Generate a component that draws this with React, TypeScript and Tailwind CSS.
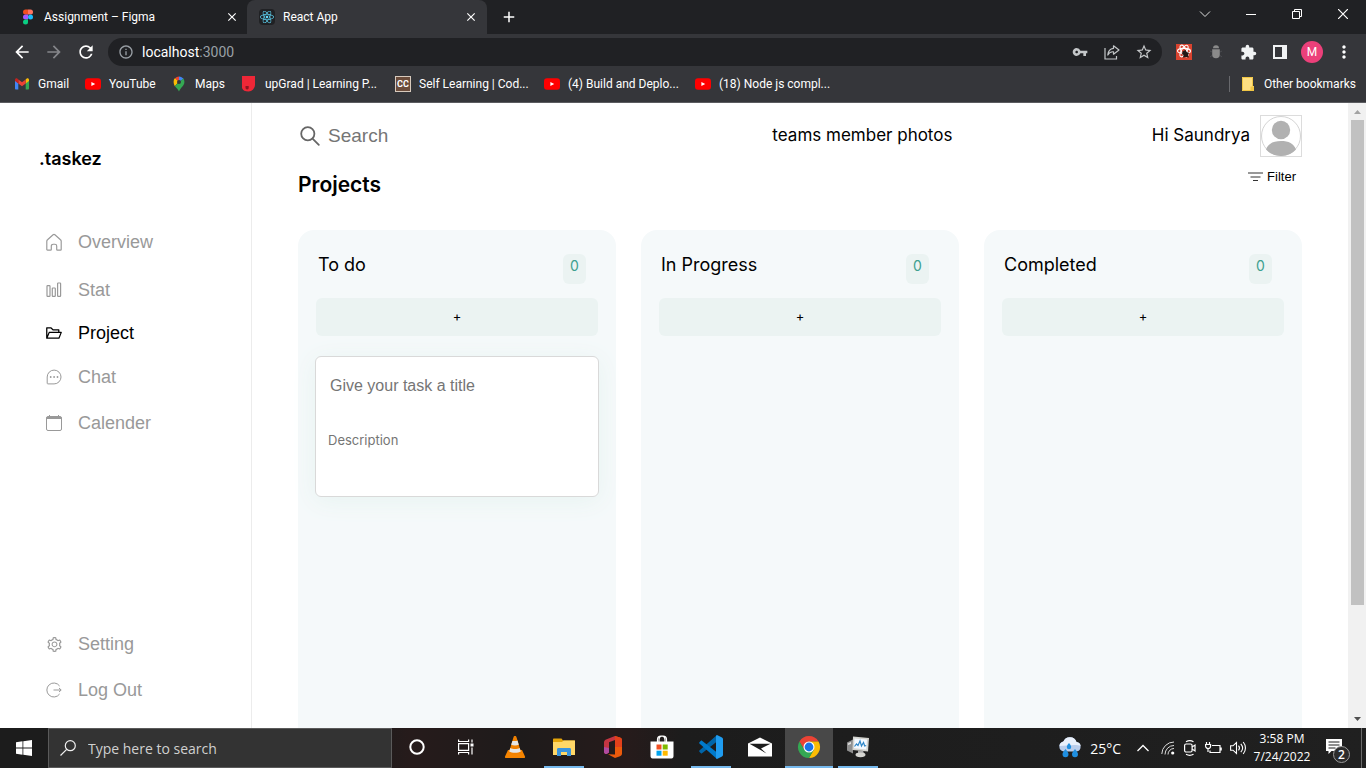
import React from "react";
import {
  MdArrowBack,
  MdArrowForward,
  MdRefresh,
  MdInfoOutline,
  MdVpnKey,
  MdStarBorder,
  MdExtension,
  MdMoreVert,
  MdClose,
  MdAdd,
} from "react-icons/md";
import { AiOutlineFolderOpen, AiOutlineSetting } from "react-icons/ai";
import { FaReact } from "react-icons/fa";

/* ---------- browser chrome ---------- */

function FigmaLogo() {
  return (
    <svg width="12" height="16" viewBox="0 0 12 16">
      <path d="M3.5 0.5H6v5H3.5a2.5 2.5 0 0 1 0-5z" fill="#f24e1e" />
      <path d="M6 0.5h2.5a2.5 2.5 0 0 1 0 5H6z" fill="#ff7262" />
      <path d="M3.5 5.5H6v5H3.5a2.5 2.5 0 0 1 0-5z" fill="#a259ff" />
      <circle cx="8.5" cy="8" r="2.5" fill="#1abcfe" />
      <path d="M3.5 10.5H6V13a2.5 2.5 0 1 1-2.5-2.5z" fill="#0acf83" />
    </svg>
  );
}

function GmailLogo() {
  return (
    <svg width="16" height="16" viewBox="0 0 16 16">
      <path d="M1 4.2v8.3c0 .5.4 1 1 1h2.3V7.2z" fill="#4285f4" />
      <path d="M15 4.2v8.3c0 .5-.4 1-1 1h-2.3V7.2z" fill="#34a853" />
      <path d="M11.7 3.6v3.8L15 5V3.9c0-1.4-1.5-2-2.5-1.2z" fill="#fbbc04" />
      <path d="M4.3 7.4V3.4L8 6.2l3.7-2.8v4L8 10.2z" fill="#ea4335" />
      <path d="M1 5V3.9C1 2.5 2.5 1.9 3.5 2.7l.8.7v4z" fill="#c5221f" />
    </svg>
  );
}

function YouTubeLogo() {
  return (
    <svg width="16" height="16" viewBox="0 0 16 16">
      <rect x="0" y="2.2" width="16" height="11.6" rx="3" fill="#f00" />
      <path d="M6.4 5.9v4.2L10.2 8z" fill="#fff" />
    </svg>
  );
}

function MapsLogo() {
  return (
    <svg width="16" height="16" viewBox="0 0 16 16">
      <path d="M2.6 6A5.4 5.4 0 0 1 4 2l4 3.5-4.2 4.7C3 8.7 2.6 7.5 2.6 6z" fill="#fbbc04" />
      <path d="M4 2.2A5.4 5.4 0 0 1 8 .4v5.4z" fill="#ea4335" />
      <path d="M8 .4c1.8 0 3.5 1 4.5 2.3L8 6z" fill="#4285f4" />
      <path d="M12.4 2.5c.7 1 1 2.2 1 3.5 0 4-4 5.5-5.4 9.6-.6-2-2.700-3.700-4.200-5.600z" fill="#34a853" />
      <circle cx="8" cy="5.9" r="2" fill="#35363a" />
    </svg>
  );
}

function UpgradLogo() {
  return (
    <svg width="16" height="16" viewBox="0 0 16 16">
      <path d="M1 0h13v9a6.5 6.5 0 0 1-6.5 6.500C4 15.500 1.800 14.500 1 12z" fill="#ee2737" />
      <path d="M4.500 10h3.200v1.700a1.600 1.600 0 0 1-3.200.3z" fill="#8d1420" />
    </svg>
  );
}

function CodingLogo() {
  return (
    <span className="flex h-4 w-4 items-center justify-center border border-[#d8cabd] bg-[#6b4c3b] text-[9px] leading-3 font-bold text-white">
      CC
    </span>
  );
}

const bookmarks = [
  { label: "Gmail", icon: <GmailLogo />, width: "w-[71px]" },
  { label: "YouTube", icon: <YouTubeLogo />, width: "w-[86px]" },
  { label: "Maps", icon: <MapsLogo />, width: "w-[70px]" },
  { label: "upGrad | Learning P...", icon: <UpgradLogo />, width: "w-[154px]" },
  { label: "Self Learning | Cod...", icon: <CodingLogo />, width: "w-[149px]" },
  { label: "(4) Build and Deplo...", icon: <YouTubeLogo />, width: "w-[151px]" },
  { label: "(18) Node js compl...", icon: <YouTubeLogo />, width: "w-[151px]" },
];

function TabStrip() {
  return (
    <div className="flex h-[34px] shrink-0 bg-[#202124]">
      <div className="flex w-[247px] items-center pl-[22px] pr-[7px]">
        <FigmaLogo />
        <span className="ml-[10px] flex-1 truncate">Assignment – Figma</span>
        <button aria-label="Close Assignment tab" className="flex w-4 justify-center">
          <MdClose size={14} />
        </button>
      </div>
      <div className="flex w-[240px] items-center rounded-t-lg bg-[#35363a] pl-3 pr-2">
        <span className="flex h-4 w-4 items-center justify-center rounded-sm bg-[#202124] text-[#61dafb]">
          <FaReact size={14} />
        </span>
        <span className="ml-2 flex-1 truncate">React App</span>
        <button aria-label="Close React App tab" className="flex w-4 justify-center">
          <MdClose size={14} />
        </button>
      </div>
      <button aria-label="New tab" className="flex w-11 items-center justify-center">
        <MdAdd size={18} />
      </button>
      <div className="ml-auto flex h-7">
        <button aria-label="Search tabs" className="flex w-[46px] items-center justify-center">
          <svg width="12" height="12" viewBox="0 0 12 12" fill="none" stroke="#ddd">
            <path d="M1 3.5l5 5 5-5" />
          </svg>
        </button>
        <button aria-label="Minimize" className="flex w-[46px] items-center justify-center">
          <svg width="10" height="10" viewBox="0 0 10 10" stroke="#fff">
            <path d="M0 5.5h10" />
          </svg>
        </button>
        <button aria-label="Restore" className="flex w-[46px] items-center justify-center">
          <svg width="10" height="10" viewBox="0 0 10 10" fill="none" stroke="#fff">
            <path d="M.5 2.5h7v7h-7zM2.5 2.5v-2h7v7h-2" />
          </svg>
        </button>
        <button aria-label="Close window" className="flex w-[46px] items-center justify-center">
          <svg width="10" height="10" viewBox="0 0 10 10" stroke="#fff" strokeWidth="1.2">
            <path d="M0 0l10 10M10 0L0 10" />
          </svg>
        </button>
      </div>
    </div>
  );
}

function ToolButton({ label, children }: { label: string; children: React.ReactNode }) {
  return (
    <button aria-label={label} className="flex h-7 w-8 shrink-0 items-center justify-center">
      {children}
    </button>
  );
}

function Toolbar() {
  return (
    <div className="flex h-9 shrink-0 items-center bg-[#35363a] px-[6px]">
      <ToolButton label="Back"><MdArrowBack size={20} /></ToolButton>
      <ToolButton label="Forward"><MdArrowForward size={20} color="#85868a" /></ToolButton>
      <ToolButton label="Reload"><MdRefresh size={20} /></ToolButton>
      <div className="mx-[6px] flex h-7 flex-1 items-center rounded-full bg-[#202124] pr-[2px] pl-[10px] text-[#c4c7c9]">
        <MdInfoOutline size={16} color="#9aa0a6" />
        <a href="#" className="ml-2 flex-1 text-[14px] text-white">
          localhost<span className="text-[#9aa0a6]">:3000</span>
        </a>
        <ToolButton label="Passwords"><MdVpnKey size={16} /></ToolButton>
        <ToolButton label="Share">
          <svg width="16" height="16" viewBox="0 0 16 16" fill="none" stroke="currentColor" strokeWidth="1.2">
            <path d="M1 4v11h11.5v-3" />
            <path d="M9.5 1.8L15 6l-5.5 4.2V7.8C7 7.6 5 8.6 3.8 11c.3-4 2.2-6.300 5.700-6.700z" strokeLinejoin="round" />
          </svg>
        </ToolButton>
        <ToolButton label="Bookmark this tab"><MdStarBorder size={18} /></ToolButton>
      </div>
      <ToolButton label="React extension">
        <svg width="16" height="16" viewBox="0 0 16 16">
          <rect width="16" height="16" fill="#d9432f" />
          <g fill="none" stroke="#fff" strokeWidth="1.1">
            <ellipse cx="8" cy="7" rx="6.5" ry="2.6" />
            <ellipse cx="8" cy="7" rx="6.5" ry="2.6" transform="rotate(60 8 7)" />
            <ellipse cx="8" cy="7" rx="6.5" ry="2.6" transform="rotate(120 8 7)" />
          </g>
          <path d="M6.5 7.500l3-1.500 1.200 2 2.300 1-1 2 1 2.500-3-.5-3 .5.500-2.500-1.500-1z" fill="#231815" />
        </svg>
      </ToolButton>
      <ToolButton label="Debugger extension">
        <svg width="14" height="16" viewBox="0 0 14 16">
          <path d="M4 4.200a3 3 0 0 1 6 0z" fill="#8a8a8a" />
          <path d="M3.200 5.200h7.600v5.300a3.800 3.800 0 0 1-7.600 0z" fill="#8a8a8a" />
          <path d="M1 7l2 1M13 7l-2 1M1 13l2-1.500M13 13l-2-1.500" stroke="#4c4d51" />
        </svg>
      </ToolButton>
      <ToolButton label="Extensions"><MdExtension size={17} color="#f1f3f4" /></ToolButton>
      <ToolButton label="Side panel">
        <svg width="14" height="14" viewBox="0 0 14 14">
          <path d="M1 1h12v12H1z" fill="none" stroke="#f1f3f4" strokeWidth="2" />
          <path d="M9 1h4v12H9z" fill="#f1f3f4" />
        </svg>
      </ToolButton>
      <ToolButton label="Profile">
        <span className="flex h-[22px] w-[22px] items-center justify-center rounded-full bg-[#ec407a] text-[12px]">M</span>
      </ToolButton>
      <ToolButton label="Menu"><MdMoreVert size={20} /></ToolButton>
    </div>
  );
}

function BookmarksBar() {
  return (
    <div className="flex h-[33px] shrink-0 items-center border-b border-[#5b5c60] bg-[#35363a] pb-1 pl-[14px] pr-[10px]">
      {bookmarks.map((b) => (
        <a key={b.label} href="#" className={`flex items-center gap-2 whitespace-nowrap ${b.width}`}>
          {b.icon}
          {b.label}
        </a>
      ))}
      <div className="ml-auto flex items-center">
        <span className="mr-3 h-4 w-px bg-[#68696d]" />
        <a href="#" className="flex items-center gap-[10px] whitespace-nowrap">
          <svg width="12" height="14" viewBox="0 0 12 14">
            <path d="M0 0h11v9h1v5H0z" fill="#ffe082" />
            <path d="M.5.5h10v9M.5.5v13h9.5" stroke="#f1c644" fill="none" />
            <path d="M8.5 9.5H12V14H8.5z" fill="#f1c644" />
          </svg>
          Other bookmarks
        </a>
      </div>
    </div>
  );
}

/* ---------- page ---------- */

type NavEntry = { label: string; height: string; icon: React.ReactNode; active?: boolean };

const navTop: NavEntry[] = [
  {
    label: "Overview",
    height: "h-[50px]",
    icon: (
      <svg width="18" height="18" viewBox="0 0 18 20" fill="none" stroke="currentColor" strokeWidth="1.3" strokeLinejoin="round">
        <path d="M1 9.2c0-.7.3-1.3.8-1.7l6.2-5.6a1.5 1.5 0 0 1 2 0l6.2 5.6c.5.4.8 1 .8 1.7v9c0 .5-.3.8-.8.8h-3.400c-.5 0-.8-.3-.8-.8v-3.700c0-1.100-.9-2-2-2H8c-1.100 0-2 .9-2 2v3.700c0 .5-.3.800-.8.800H1.800c-.5 0-.8-.3-.8-.8z" />
      </svg>
    ),
  },
  {
    label: "Stat",
    height: "h-[46px]",
    icon: (
      <svg width="16" height="16" viewBox="0 0 16 16" fill="none" stroke="currentColor" strokeWidth="1.2">
        <rect x="1" y="3.6" width="3" height="10.8" rx=".6" />
        <rect x="6.3" y="6" width="3" height="8.4" rx=".6" />
        <rect x="11.6" y="1" width="3" height="13.4" rx=".6" />
      </svg>
    ),
  },
  { label: "Project", height: "h-[40px]", icon: <AiOutlineFolderOpen size={18} />, active: true },
  {
    label: "Chat",
    height: "h-[48px]",
    icon: (
      <svg width="16" height="16" viewBox="0 0 16 16" fill="none" stroke="currentColor">
        <path d="M1.2 14.2V8a6.9 6.9 0 1 1 6.9 6.9H1.9a.7.7 0 0 1-.7-.7z" />
        <g fill="currentColor" stroke="none">
          <circle cx="4.7" cy="8" r=".9" />
          <circle cx="8.1" cy="8" r=".9" />
          <circle cx="11.5" cy="8" r=".9" />
        </g>
      </svg>
    ),
  },
  {
    label: "Calender",
    height: "h-[44px]",
    icon: (
      <svg width="16" height="16" viewBox="0 0 16 16" fill="none" stroke="currentColor">
        <rect x=".5" y="1.5" width="15" height="14" rx="1.5" />
        <path d="M.5 2.5h15M.5 3.5h15M3.5 0v2M12.5 0v2" />
      </svg>
    ),
  },
];

const navBottom: NavEntry[] = [
  { label: "Setting", height: "h-[46px]", icon: <AiOutlineSetting size={17} /> },
  {
    label: "Log Out",
    height: "h-[46px]",
    icon: (
      <svg width="16" height="16" viewBox="0 0 16 16" fill="none" stroke="currentColor">
        <path d="M13.6 4A7 7 0 1 0 13.6 12M7.5 8h7.500M13 6l2.200 2-2.200 2" />
      </svg>
    ),
  },
];

function NavList({ items }: { items: NavEntry[] }) {
  return (
    <ul>
      {items.map((n) => (
        <li key={n.label}>
          <a
            href="#"
            className={`flex items-center gap-[14px] text-[18px] ${n.height} ${n.active ? "text-black" : "text-[#999999]"}`}
          >
            <span className="flex w-5 justify-center">{n.icon}</span>
            {n.label}
          </a>
        </li>
      ))}
    </ul>
  );
}

function Sidebar() {
  return (
    <aside className="flex w-[252px] shrink-0 flex-col border-r border-[#ececec] bg-white pb-[15px]">
      <div className="mt-[42px] ml-[39px] font-['Inter',sans-serif] text-[18px] leading-7 font-semibold">.taskez</div>
      <nav className="mt-11 flex flex-1 flex-col justify-between pl-11">
        <NavList items={navTop} />
        <NavList items={navBottom} />
      </nav>
    </aside>
  );
}

function PageHeader() {
  return (
    <header className="flex h-[42px] items-center justify-between">
      <label className="flex w-[275px] items-center gap-2 pl-[2px]">
        <svg className="shrink-0" width="20" height="20" viewBox="0 0 20 20" fill="none" stroke="#666" strokeWidth="1.8" strokeLinecap="round">
          <circle cx="7.8" cy="7.8" r="6.6" />
          <path d="M12.800 12.800l6 6" />
        </svg>
        <input
          aria-label="Search"
          placeholder="Search"
          className="w-full bg-transparent text-[19px] outline-none placeholder:text-[#757575]"
        />
      </label>
      <p className="font-['Inter',sans-serif] text-[17px]">teams member photos</p>
      <div className="flex items-center gap-[10px] font-['Inter',sans-serif] text-[17px]">
        Hi Saundrya
        <svg width="42" height="42" viewBox="0 0 42 42">
          <rect x=".5" y=".5" width="41" height="41" fill="#fff" stroke="#dcdcdc" />
          <circle cx="21" cy="21" r="19.5" fill="#fff" stroke="#d4d4d4" />
          <circle cx="21" cy="15" r="9.2" fill="#b1b1b1" />
          <path d="M6 34.5C8 28.5 13.5 26 21 26s13 2.500 15 8.500A19.500 19.500 0 0 1 21 41a19.500 19.500 0 0 1-15-6.500z" fill="#b1b1b1" />
        </svg>
      </div>
    </header>
  );
}

function Column({ title, children }: { title: string; children?: React.ReactNode }) {
  return (
    <section className="min-h-[720px] rounded-[16px] bg-[#f5f9fa] px-[17px] pt-5">
      <div className="flex items-start justify-between pr-[13px] pl-[3px] font-['Inter',sans-serif]">
        <h2 className="text-[18px] leading-[30px]">{title}</h2>
        <span className="mt-1 h-[30px] w-[23px] rounded-md bg-[#ebf3f2] text-center text-[14px] leading-6 text-[#3da08f]">
          0
        </span>
      </div>
      <div className="mt-[14px] px-px">
        <button
          aria-label={`Add task to ${title}`}
          className="h-[38px] w-full rounded-md bg-[#ebf3f2] font-['Inter',sans-serif] text-[13px]"
        >
          +
        </button>
      </div>
      {children}
    </section>
  );
}

function TaskCard() {
  return (
    <form className="mt-5 flex h-[141px] flex-col rounded-md border border-[#d9d9d9] bg-white px-3 pt-[17px] shadow-[0_4px_24px_#e7f3f1]">
      <input
        aria-label="Task title"
        placeholder="Give your task a title"
        className="h-6 w-full px-[2px] text-[16px] outline-none placeholder:text-[#757575]"
      />
      <textarea
        aria-label="Task description"
        placeholder="Description"
        className="mt-8 h-[50px] w-full resize-none font-['Inter',sans-serif] text-[13px] leading-5 outline-none placeholder:text-[#757575]"
      />
    </form>
  );
}

function Scrollbar() {
  return (
    <div aria-hidden="true" className="flex w-[18px] shrink-0 flex-col items-center bg-[#f1f1f1]">
      <svg width="18" height="17" viewBox="0 0 18 17"><path d="M6 11l3.5-4 3.5 4z" fill="#a3a3a3" /></svg>
      <div className="flex w-full flex-1 justify-end pr-[2px]">
        <div className="h-[82%] w-[13px] bg-[#c1c1c1]" />
      </div>
      <svg width="18" height="17" viewBox="0 0 18 17"><path d="M6 6l3.5 4 3.5-4z" fill="#505050" /></svg>
    </div>
  );
}

function Page() {
  return (
    <div className="flex min-h-0 flex-1 bg-white font-['Liberation_Sans',Arial,sans-serif] text-black">
      <Sidebar />
      <main className="min-w-0 flex-1 overflow-hidden pt-3 pr-[46px] pl-[46px]">
        <PageHeader />
        <div className="flex h-[73px] items-start justify-between">
          <h1 className="mt-[14px] font-['Inter',sans-serif] text-[21px] leading-7 font-semibold">Projects</h1>
          <button className="mt-[10px] mr-[6px] flex items-center gap-1 text-[13px] leading-5">
            <svg width="15" height="10" viewBox="0 0 15 10" stroke="#333" strokeWidth="1.2">
              <path d="M0 1h15M2.500 5h10M5 8.500h5" />
            </svg>
            Filter
          </button>
        </div>
        <div className="grid grid-cols-3 gap-[25px]">
          <Column title="To do">
            <TaskCard />
          </Column>
          <Column title="In Progress" />
          <Column title="Completed" />
        </div>
      </main>
      <Scrollbar />
    </div>
  );
}

/* ---------- taskbar ---------- */

type AppEntry = { label: string; icon: React.ReactNode; line?: boolean; active?: boolean };

const apps: AppEntry[] = [
  {
    label: "Cortana",
    icon: <svg width="16" height="16" viewBox="0 0 16 16"><circle cx="8" cy="8" r="6.7" fill="none" stroke="#fff" strokeWidth="2" /></svg>,
  },
  {
    label: "Task View",
    icon: (
      <svg width="16" height="16" viewBox="0 0 16 16" fill="none" stroke="#fff" strokeWidth="1.2">
        <path d="M.6.500v2h10v-2M.6 15.500v-2h10v2M.6 4.600h10v6.800H.6zM14 .5v3M14 8.500v7" />
        <path d="M12.500 4.500h3v3h-3z" fill="#fff" stroke="none" />
      </svg>
    ),
  },
  {
    label: "VLC",
    icon: (
      <svg width="22" height="24" viewBox="0 0 22 24">
        <path d="M4 15h14l3 6.500c.2.800 0 1.500-1 1.500H2c-1 0-1.200-.7-1-1.500z" fill="#f58400" />
        <path d="M11 1c.9 0 1.300.4 1.500 1.200L17 17c0 1.500-3 2.500-6 2.500S5 18.500 5 17L9.500 2.200C9.700 1.400 10.100 1 11 1z" fill="#f08000" />
        <path d="M8.500 5.500L7.200 9.800c2 1 5.600 1 7.600 0l-1.300-4.300c-1.500.7-3.500.7-5 0zM6.300 13L5.200 16.500c2.500 1.700 9.100 1.700 11.600 0L15.700 13c-2.500 1.300-6.900 1.300-9.400 0z" fill="#e6e6e6" />
      </svg>
    ),
  },
  {
    label: "File Explorer",
    line: true,
    icon: (
      <svg width="22" height="20" viewBox="0 0 22 20">
        <path d="M0 2.500C0 2 .3 1.500 1 1.500h7.500l1.500 2h11c.7 0 1 .4 1 1V18H0z" fill="#e5a50a" />
        <path d="M0 5h9l1.500-1.500H22V18H0z" fill="#ffd767" />
        <path d="M4 19v-6.500c0-1 .5-1.500 1.500-1.500h11c1 0 1.500.5 1.500 1.500V19h-4v-4H8v4z" fill="#3a94dd" />
      </svg>
    ),
  },
  {
    label: "Office",
    icon: (
      <svg width="20" height="22" viewBox="0 0 20 22">
        <path d="M12 0L3 3.500c-1.200.5-2 1.500-2 3v9.300c0 1.800 1.500 2.700 3 1.900l2-1.200V6.300L12 4z" fill="#c43542" />
        <path d="M1 11v4.800c0 1.800 1.500 2.700 3 1.900l2-1.200V12z" fill="#b04aa0" />
        <path d="M12 0l5 1.600c1.300.5 2 1.500 2 2.700v13.200c0 1.300-.8 2.300-2 2.700L12 22l-7-3.700 7 .2z" fill="#eb5a0c" />
        <path d="M12 0l5 1.600c1.300.5 2 1.500 2 2.700V11h-7z" fill="#e2401b" />
      </svg>
    ),
  },
  {
    label: "Microsoft Store",
    icon: (
      <svg width="24" height="24" viewBox="0 0 24 24">
        <path d="M7.500 7V4.500C7.500 2.500 9 1 11 1M16.500 7V4.500C16.500 2.500 15 1 13 1s-4 1-4 4v2M11 1c2 0 4 1 4 4v2" fill="none" stroke="#fff" strokeWidth="1.200" />
        <path d="M.5 6.500h23V21c0 1.500-.7 2.500-2 2.500h-19c-1.300 0-2-1-2-2.500z" fill="#fff" />
        <path d="M6.500 9.500h5v5h-5z" fill="#f25022" />
        <path d="M12.700 9.500h5v5h-5z" fill="#7fba00" />
        <path d="M6.500 15.700h5v5h-5z" fill="#00a4ef" />
        <path d="M12.700 15.700h5v5h-5z" fill="#ffb900" />
      </svg>
    ),
  },
  {
    label: "Visual Studio Code",
    line: true,
    icon: (
      <svg width="24" height="24" viewBox="0 0 24 24">
        <path d="M18 0v6.500L3 18.200c-.4.300-.8.300-1.100 0L.4 16.800c-.4-.4-.4-1 0-1.300z" fill="#0065a9" />
        <path d="M18 24v-6.500L3 5.800c-.4-.3-.8-.3-1.100 0L.4 7.200c-.4.400-.4 1 0 1.300z" fill="#007acc" />
        <path d="M18 0l5 2.400c.6.300 1 .9 1 1.500v16.200c0 .6-.4 1.200-1 1.500L18 24c-.5-.3-1-.7-1-1.500V1.500C17 .7 17.500.3 18 0z" fill="#1f9cf0" />
      </svg>
    ),
  },
  {
    label: "Mail",
    icon: (
      <svg width="24" height="20" viewBox="0 0 24 20">
        <path d="M0 6.500L12 .5l12 6V19.500H0z" fill="#fff" />
        <path d="M1.500 6.800h21L13 11.500l5.500 5z" fill="#1c1c1c" />
      </svg>
    ),
  },
  {
    label: "Chrome",
    line: true,
    active: true,
    icon: (
      <svg width="24" height="24" viewBox="0 0 24 24">
        <path d="M2.470 6.500A11 11 0 0 1 21.530 6.500H12L7.240 14.750z" fill="#ea4335" />
        <path d="M21.530 6.500A11 11 0 0 1 12 23l4.760-8.250L12 6.500z" fill="#fbbc04" />
        <path d="M12 23A11 11 0 0 1 2.470 6.500l4.770 8.250h9.520z" fill="#34a853" />
        <circle cx="12" cy="12" r="5.5" fill="#fff" />
        <circle cx="12" cy="12" r="4.4" fill="#1a73e8" />
      </svg>
    ),
  },
  {
    label: "Performance Monitor",
    line: true,
    icon: (
      <svg width="24" height="22" viewBox="0 0 24 22">
        <path d="M1 6.500l6-3v14l-6-3z" fill="#8f8f8f" />
        <path d="M2 7.500l3-1.500v2l-3 1z" fill="#e0e0e0" />
        <path d="M7 .5l16 1.500-1 13.500-15.500-1.500z" fill="#d4d4d0" />
        <path d="M8.500 2.500L21 3.500l-.7 10L8 12.300z" fill="#f4f9ff" />
        <path d="M8.500 10.500l2-2.500 1.500 1.500 2-4.500 1.500 5 2-3.500 1.200 3.500 1.500-.5" fill="none" stroke="#2f86c8" strokeWidth="1.200" />
        <path d="M12 14.500h5l1 3h-6z" fill="#a9a9a9" />
        <ellipse cx="14.500" cy="18.800" rx="5" ry="2.400" fill="#d4d4d0" />
      </svg>
    ),
  },
];

function Taskbar() {
  return (
    <footer className="flex h-10 shrink-0 bg-[linear-gradient(90deg,#1c1c1c_0%,#1c1c1c_26%,#261b1b_30%,#1e1b1b_38%,#261b1b_46%,#1c1c1c_50%,#202020_100%)] font-['Open_Sans','Noto_Sans',sans-serif] text-white">
      <button aria-label="Start" className="flex w-12 items-center justify-center">
        <svg width="16" height="16" viewBox="0 0 16 16" fill="#fff">
          <path d="M0 2.200L6.500 1.300v6.200H0zM7.300 1.200L16 0v7.500H7.300zM0 8.400h6.500v6.300L0 13.800zM7.300 8.400H16V16l-8.700-1.200z" />
        </svg>
      </button>
      <label className="flex w-[344px] items-center gap-3 border border-[#5a5a5a] bg-[#333333] pl-[11px]">
        <svg width="16" height="16" viewBox="0 0 16 16" fill="none" stroke="#f0f0f0" strokeWidth="1.200">
          <circle cx="10.300" cy="5.700" r="5" />
          <path d="M6.700 9.300L.5 15.500" />
        </svg>
        <input
          aria-label="Type here to search"
          placeholder="Type here to search"
          className="min-w-0 flex-1 bg-transparent text-[14px] outline-none placeholder:text-[#d0d0d0]"
        />
      </label>
      <div className="flex gap-px pl-px">
        {apps.map((a) => (
          <button
            key={a.label}
            aria-label={a.label}
            className={`flex w-12 flex-col items-center ${a.active ? "bg-[#484848]" : ""}`}
          >
            <span className="flex flex-1 items-center">{a.icon}</span>
            <span className={`h-[2px] ${a.active ? "w-full" : "w-10"} ${a.line ? "bg-[#76b9ed]" : ""}`} />
          </button>
        ))}
      </div>
      <div className="ml-auto flex items-center">
        <button className="flex items-center gap-2 text-[14px]">
          <svg width="24" height="22" viewBox="0 0 24 22">
            <path d="M6 14.500a5 5 0 0 1-.6-9.900A7 7 0 0 1 18.500 5 4.800 4.800 0 0 1 18.500 14.500z" fill="#b9cdec" />
            <path d="M5.400 4.600A7 7 0 0 1 18.500 5c2.500.3 4 2 4.200 4C18 7 8 9 1.500 9 2 6.500 3.500 5 5.400 4.600z" fill="#e9f0fb" />
            <path d="M11 6c1.700 2 2.200 3 2.200 4a2.200 2.200 0 0 1-4.400 0c0-1 .5-2 2.200-4zM7.500 12c2.200 2.700 3 4 3 5.300a3 3 0 0 1-6 0c0-1.300.8-2.600 3-5.300zM17 12c2.200 2.700 3 4 3 5.300a3 3 0 0 1-6 0c0-1.300.8-2.600 3-5.300z" fill="#1f8fe0" />
          </svg>
          25°C
        </button>
        <button aria-label="Show hidden icons" className="ml-[14px] flex w-4 justify-center">
          <svg width="12" height="8" viewBox="0 0 12 8" fill="none" stroke="#fff" strokeWidth="1.300"><path d="M.5 7L6 1.500 11.500 7" /></svg>
        </button>
        <div className="ml-[10px] flex items-center gap-2">
          <svg width="14" height="14" viewBox="0 0 14 14" fill="none" stroke="#ddd">
            <path d="M.8 13A12.200 12.200 0 0 1 13 1M4 13.500A9 9 0 0 1 13 4.500M7 13.500a6 6 0 0 1 6-6" />
            <circle cx="11.700" cy="12" r="1.600" fill="#fff" stroke="none" />
          </svg>
          <svg width="14" height="16" viewBox="0 0 14 16" fill="none" stroke="#fff" strokeWidth="1.200">
            <rect x="1.600" y="4" width="7.500" height="8" rx="1.500" />
            <path d="M9 7l3-2v6L9 9M3 1.700C5.500.3 8 .3 10.500 1.700M3 14.300c2.500 1.400 5 1.400 7.500 0" />
          </svg>
          <svg width="17" height="14" viewBox="0 0 17 14" fill="none" stroke="#fff" strokeWidth="1.200">
            <path d="M7 4.500h8v7H5v-2M16.200 6.500v3M1.500 1v2.500M4.500 1v2.500M.6 3.500h5v1.500a2.500 2.500 0 0 1-5 0zM3 7.500V11" />
          </svg>
          <svg width="17" height="14" viewBox="0 0 17 14" fill="none" stroke="#fff" strokeWidth="1.100">
            <path d="M.6 4.800h2.400L6.500 1.500v11L3 9.200H.6zM8.500 4.700c1.200 1.400 1.200 3.200 0 4.600M10.800 2.800c2.200 2.500 2.200 5.900 0 8.400M13.200 1c3 3.500 3 8.500 0 12" />
          </svg>
        </div>
        <div className="ml-2 flex w-[54px] flex-col items-center text-[12px] leading-[18px] whitespace-nowrap">
          <div>3:58 PM</div>
          <div>7/24/2022</div>
        </div>
        <button aria-label="2 notifications" className="ml-4 mr-[10px] flex w-[26px] pt-1">
          <svg width="26" height="26" viewBox="0 0 26 26">
            <path d="M1 2h16v12H6.500L3.500 17v-3H1z" fill="#fff" />
            <path d="M3.500 5h11M3.500 8h11M3.500 11h7" stroke="#1f1f1f" />
            <circle cx="16.500" cy="17.500" r="8" fill="#2c2c2c" stroke="#9a9a9a" />
            <text x="16.500" y="22" textAnchor="middle" fontSize="12" fontWeight="600" fill="#fff">2</text>
          </svg>
        </button>
        <span className="mr-1 h-10 w-px bg-[#6a6a6a]" />
      </div>
    </footer>
  );
}

export default function App() {
  return (
    <div className="flex h-screen flex-col overflow-hidden font-['Roboto','Noto_Sans',sans-serif] text-[12px] text-white">
      <TabStrip />
      <Toolbar />
      <BookmarksBar />
      <Page />
      <Taskbar />
    </div>
  );
}
